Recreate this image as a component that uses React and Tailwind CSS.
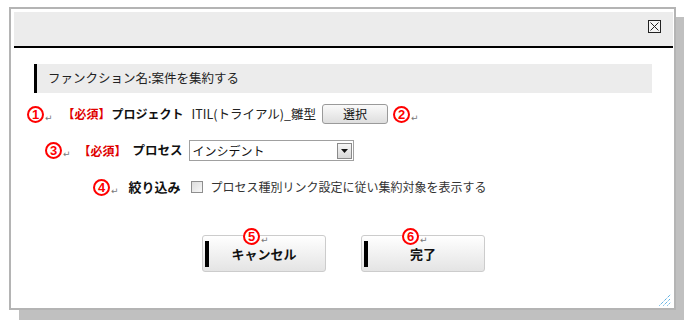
import React from 'react';

const Num = ({ n }) => (
  <span className="flex items-end">
    <span className="flex h-[17px] w-[17px] items-center justify-center rounded-full border-2 border-[#ff0000] bg-white font-['Liberation_Sans',sans-serif] text-[13px] font-bold leading-none text-[#ff0000]">
      {n}
    </span>
    <span className="ml-[1px] font-['DejaVu_Sans',sans-serif] text-[9px] leading-none text-[#777]">↵</span>
  </span>
);

const ActionButton = ({ label, n }) => (
  <div className="relative">
    <button className="flex h-[37px] w-[124px] items-center rounded-[3px] border border-[#cccccc] bg-linear-to-b from-white to-[#e4e4e4]">
      <span className="ml-[2px] h-[26px] w-[4px] bg-black" />
      <span className="flex-1 pr-[6px] text-center text-[13px] font-bold text-[#111]">{label}</span>
    </button>
    <div className="absolute left-[41px] top-[-7px]">
      <Num n={n} />
    </div>
  </div>
);

export default function App() {
  return (
    <div className="min-h-screen bg-white pl-[9px] pt-[7px] font-['Noto_Sans_CJK_JP',sans-serif] text-[12px] text-[#222]">
      <div className="flex h-[303px] w-[667px] flex-col border-2 border-[#b4b4b4] bg-white pl-[3px] pr-[1px] pt-[3px] shadow-[10px_10px_0_#c0c0c0]">
        {/* header */}
        <div className="flex h-[36px] shrink-0 items-start justify-end border-b-2 border-black bg-[#ececec] pr-[12px] pt-[8px]">
          <div className="flex h-[13px] w-[13px] items-center justify-center border border-[#222] bg-[#f4f4f4]">
            <svg width="9" height="9" viewBox="0 0 9 9">
              <path d="M0.5 0.5 L8.5 8.5 M8.5 0.5 L0.5 8.5" stroke="#222" strokeWidth="1" />
            </svg>
          </div>
        </div>

        {/* section title */}
        <div className="ml-[20px] mr-[21px] mt-[16px] flex h-[29px] items-center border-l-[3px] border-black bg-[#ececec] pl-[11px]">
          <span className="text-[12.5px] text-[#222]">ファンクション名:案件を集約する</span>
        </div>

        {/* project */}
        <div className="ml-[13px] mt-[11px] flex h-[20px] items-center">
          <Num n="1" />
          <span className="ml-[10px] font-bold text-[#e00000]">【必須】</span>
          <span className="ml-[1px] font-bold text-[#111]">プロジェクト</span>
          <span className="ml-[8px] text-[12.5px] text-[#222]">ITIL(トライアル)_雛型</span>
          <button className="ml-[6px] h-[20px] w-[66px] rounded-[3px] border border-[#9a9a9a] bg-linear-to-b from-[#fafafa] to-[#dedede] text-[12px] text-[#111]">
            選択
          </button>
          <span className="ml-[5px]">
            <Num n="2" />
          </span>
        </div>

        {/* process */}
        <div className="ml-[31px] mt-[16px] flex h-[21px] items-center">
          <Num n="3" />
          <span className="ml-[8px] font-bold text-[#e00000]">【必須】</span>
          <span className="ml-[6px] text-[12.5px] font-bold text-[#111]">プロセス</span>
          <div className="ml-[6px] flex h-[21px] w-[165px] items-center border border-[#a0a0a0] bg-white pl-[3px] pr-[1px]">
            <span className="flex-1 text-[12px] text-[#111]">インシデント</span>
            <span className="flex h-[16px] w-[15px] items-center justify-center border border-[#8a8a8a] bg-linear-to-b from-[#f6f6f6] to-[#d8d8d8]">
              <svg width="7" height="4" viewBox="0 0 7 4">
                <path d="M0 0 H7 L3.5 4 Z" fill="#111" />
              </svg>
            </span>
          </div>
        </div>

        {/* filter */}
        <div className="ml-[79px] mt-[16px] flex h-[20px] items-center">
          <Num n="4" />
          <span className="ml-[10px] text-[13px] font-bold text-[#111]">絞り込み</span>
          <span className="ml-[10px] h-[12px] w-[12px] border border-[#8e8e8e] bg-linear-to-br from-[#dcdcdc] to-[#f8f8f8]" />
          <span className="ml-[8px] text-[#333]">プロセス種別リンク設定に従い集約対象を表示する</span>
        </div>

        {/* actions */}
        <div className="ml-[188px] mt-[38px] flex gap-[35px]">
          <ActionButton label="キャンセル" n="5" />
          <ActionButton label="完了" n="6" />
        </div>

        {/* resize grip */}
        <div className="mr-[2px] mt-auto mb-[2px] flex justify-end">
          <svg width="12" height="12" viewBox="0 0 12 12">
            <g stroke="#1a8fd6" strokeWidth="1" strokeDasharray="1 1">
              <path d="M0.5 11.5 L11.5 0.5" />
              <path d="M4.5 11.5 L11.5 4.5" />
              <path d="M8.5 11.5 L11.5 8.5" />
            </g>
          </svg>
        </div>
      </div>
    </div>
  );
}
